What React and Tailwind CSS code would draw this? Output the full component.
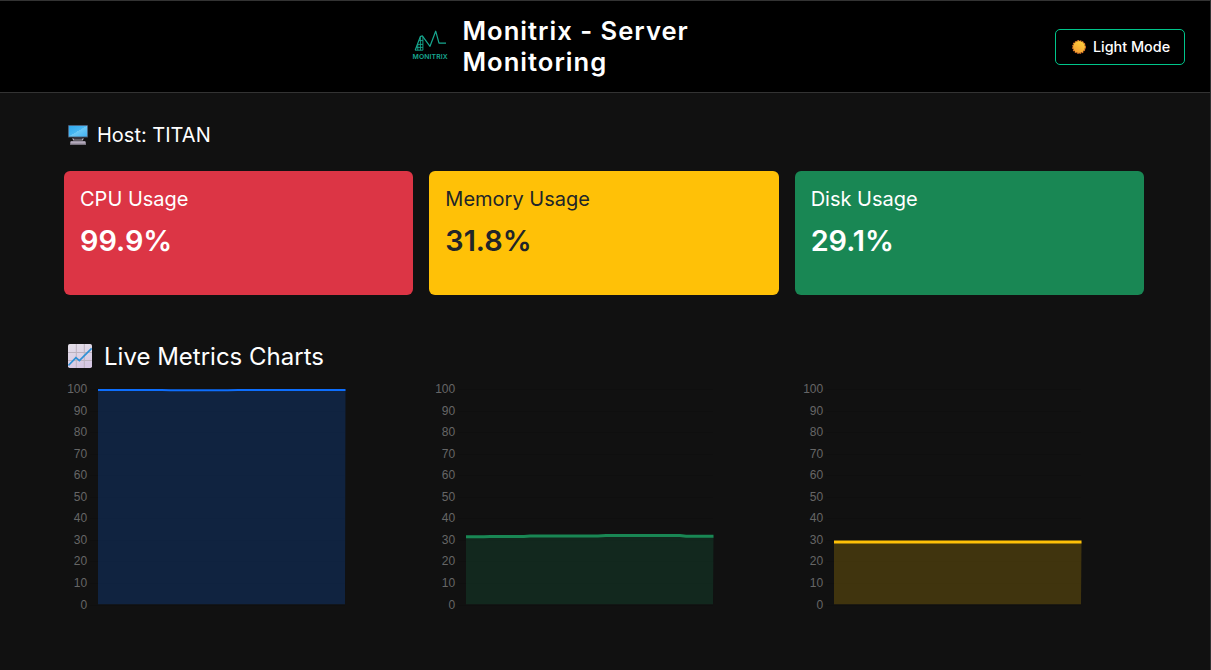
function Logo() {
  return (
    <svg className="mb-[2px] h-9 w-9 shrink-0 overflow-visible" viewBox="0 0 36 36" fill="none">
      <g stroke="#17a890" strokeLinejoin="round">
        <path d="M3.2 22.2 L8.3 8.6 L10.3 7.8 L18 18.3 L23.7 3.2 L27 15.2 H34" strokeWidth="1.2" />
        <path d="M3.2 22.2 H10.9 V8.6 M5.6 16.4 H10.9 M7 12.6 H10.9 M4.4 19.4 H10.9 M8.4 9.2 V22.2 M5.8 16 V22.2" strokeWidth="0.9" />
      </g>
      <text x="0.5" y="31.2" textLength="35.2" lengthAdjust="spacing" className="fill-[#17a890] font-['Inter',sans-serif] text-[6.8px] font-semibold">MONITRIX</text>
    </svg>
  );
}

function Sun() {
  return (
    <svg className="h-[14px] w-[14px]" viewBox="0 0 14 14">
      <defs>
        <linearGradient id="sun" x1="0.8" y1="0" x2="0.2" y2="1">
          <stop offset="0" stopColor="#ffd23c" />
          <stop offset="1" stopColor="#f59b31" />
        </linearGradient>
      </defs>
      <circle cx="7" cy="7" r="6.2" fill="none" stroke="#e8762c" strokeWidth="1.4" strokeDasharray="1.7 0.73" />
      <circle cx="7" cy="7" r="6" fill="url(#sun)" />
    </svg>
  );
}

function Computer() {
  return (
    <svg className="h-5 w-5" viewBox="0 0 20 20">
      <defs>
        <linearGradient id="screen" x1="0" y1="0" x2="1" y2="1">
          <stop offset="0" stopColor="#2fa9ee" />
          <stop offset="0.49" stopColor="#48b6f2" />
          <stop offset="0.5" stopColor="#6cc8f6" />
          <stop offset="1" stopColor="#43b0f0" />
        </linearGradient>
      </defs>
      <rect x="0" y="0" width="20" height="12.6" rx="0.6" fill="#4a4e62" />
      <rect x="0.8" y="0.8" width="18.4" height="10.8" fill="url(#screen)" />
      <path d="M6 12.5h8v1.2H6z" fill="#45414f" />
      <path d="M4.2 13.2h1.2l.8 1.2h7.6l.8-1.2h1.2l-1 2.2H5.2z" fill="#b6adbd" />
      <path d="M2.7 16h14.6l.8 3.8H2z" fill="#9d94a5" />
      <path d="M2.5 17.5h15" stroke="#b9b0c0" strokeWidth="0.8" />
    </svg>
  );
}

function ChartIcon() {
  return (
    <svg className="mb-[2px] h-6 w-6" viewBox="0 0 24 24">
      <defs>
        <linearGradient id="paper" x1="0" y1="0" x2="0.3" y2="1">
          <stop offset="0" stopColor="#e5e0e8" />
          <stop offset="1" stopColor="#d6c7e3" />
        </linearGradient>
      </defs>
      <rect width="24" height="24" rx="1.8" fill="url(#paper)" />
      <path d="M8.3 0v24M16.3 0v24M0 8.5h24M0 16.5h24" stroke="#bcb2bf" strokeWidth="1" />
      <path d="M0.4 21.5 L7.9 13.7 L11.4 16.7 L23.7 4.4" fill="none" stroke="#2e91d6" strokeWidth="1.7" />
    </svg>
  );
}

const cards = [
  { label: "CPU Usage", value: "99.9%", tone: "bg-[#dc3545] text-white" },
  { label: "Memory Usage", value: "31.8%", tone: "bg-[#ffc107] text-[#212529]" },
  { label: "Disk Usage", value: "29.1%", tone: "bg-[#198754] text-white" },
];

const charts = [
  { name: "CPU", stroke: "#0d6efd", opacity: 0.2, points: "34,10 98,10 106,10.3 164,10.3 174,10.1 200,10.1 214,9.9 248,9.9 258,10 281.5,10" },
  { name: "Memory", stroke: "#198754", opacity: 0.2, points: "34,156.8 52,156.8 58,156.5 92,156.5 98,156 166,156 174,155.5 248,155.5 254,156.2 281.5,156.2" },
  { name: "Disk", stroke: "#ffc107", opacity: 0.2, points: "34,162 281.5,162" },
];

const ticks = [100, 90, 80, 70, 60, 50, 40, 30, 20, 10, 0];

function MetricChart({ chart }) {
  return (
    <svg className="h-[240px] w-full" aria-label={chart.name}>
      {ticks.map((t, i) => (
        <g key={t}>
          <path d={`M26 ${Math.round(9 + i * 21.55) + 0.5}H281`} stroke="#000" strokeOpacity="0.1" />
          <text x="23.2" y={Math.round(13 + i * 21.55)} textAnchor="end" className="fill-[#666666] font-['Liberation_Sans',Arial,sans-serif] text-[12px]">
            {t}
          </text>
        </g>
      ))}
      <polygon points={`${chart.points} 281,224.3 34,224.3`} fill={chart.stroke} fillOpacity={chart.opacity} />
      <polyline points={chart.points} fill="none" stroke={chart.stroke} strokeWidth={chart.name === "CPU" ? 2 : 3} />
    </svg>
  );
}

export default function App() {
  return (
    <div className="h-[670px] w-full overflow-hidden border-t border-r border-t-[#333333] border-r-[#333333] bg-[#111111] font-['Inter',sans-serif] text-white">
      <header className="flex h-[92px] items-center justify-between border-b border-[#333333] bg-black pr-[25px]">
        <div className="w-[130px]" />
        <div className="ml-[282px] flex items-center gap-[14.5px]">
          <Logo />
          <h1 className="mb-[2px] w-[260px] text-[25.6px] leading-[31px] font-semibold tracking-[1px]">Monitrix - Server Monitoring</h1>
        </div>
        <button className="ml-auto flex h-9 w-[130px] items-center justify-center gap-[7px] rounded-[5px] border border-[#00c58a] pl-[2px] text-[14.4px] font-medium">
          <Sun />
          <span>Light Mode</span>
        </button>
      </header>
      <main className="pr-[66px] pl-16">
        <h2 className="flex items-center gap-[9px] pt-[30px] pl-1 text-[20px] leading-6">
          <Computer />
          <span>Host: TITAN</span>
        </h2>
        <section className="mt-6 grid grid-cols-3 gap-4">
          {cards.map((c) => (
            <div key={c.label} className={`h-[124px] rounded-md p-4 ${c.tone}`}>
              <h3 className="text-[20px] leading-6">{c.label}</h3>
              <p className="mt-2 text-[28.8px] leading-[43px] font-semibold">{c.value}</p>
            </div>
          ))}
        </section>
        <h2 className="mt-[47px] flex items-center gap-3 pl-1 text-[24px] leading-[30px]">
          <ChartIcon />
          <span>Live Metrics Charts</span>
        </h2>
        <section className="mt-2 grid grid-cols-3 gap-6">
          {charts.map((c) => (
            <MetricChart key={c.name} chart={c} />
          ))}
        </section>
      </main>
    </div>
  );
}
